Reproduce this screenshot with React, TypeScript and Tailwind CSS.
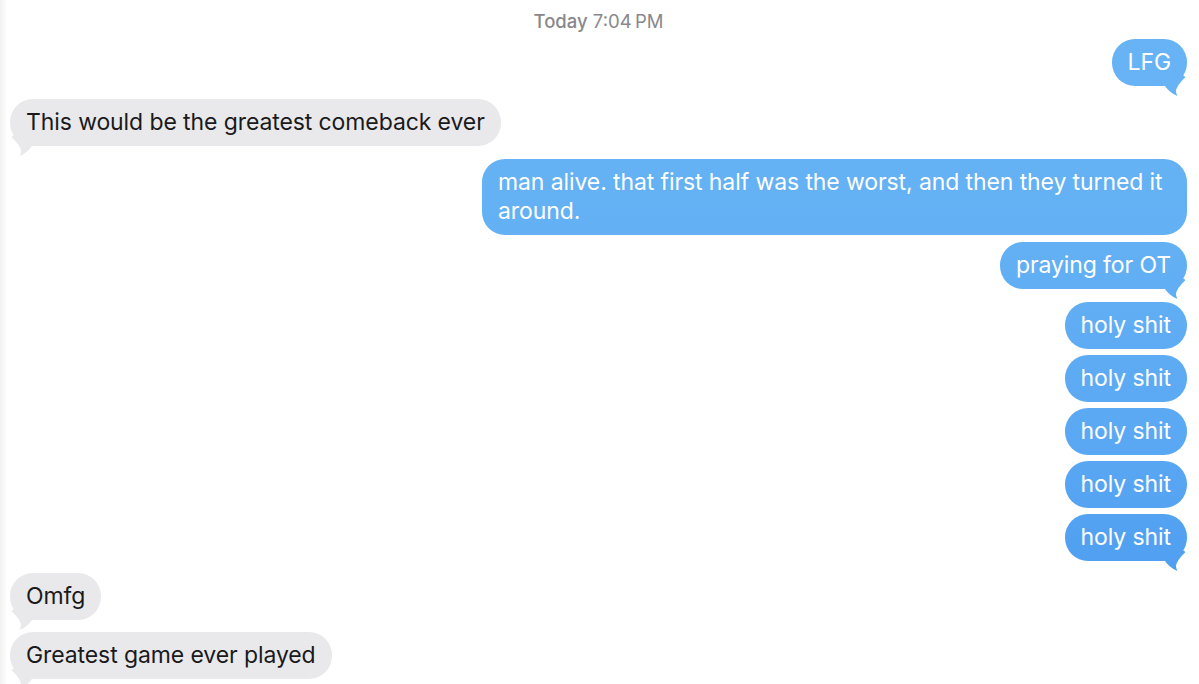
import React from "react";

type Msg = {
  text: string;
  me: boolean;
  tail: boolean;
  mt: string;
};

const messages: Msg[] = [
  { text: "LFG", me: true, tail: true, mt: "mt-[6px]" },
  { text: "This would be the greatest comeback ever", me: false, tail: true, mt: "mt-[13px]" },
  { text: "man alive. that first half was the worst, and then they turned it around.", me: true, tail: false, mt: "mt-[13px]" },
  { text: "praying for OT", me: true, tail: true, mt: "mt-[7px]" },
  { text: "holy shit", me: true, tail: false, mt: "mt-[13px]" },
  { text: "holy shit", me: true, tail: false, mt: "mt-[6px]" },
  { text: "holy shit", me: true, tail: false, mt: "mt-[6px]" },
  { text: "holy shit", me: true, tail: false, mt: "mt-[6px]" },
  { text: "holy shit", me: true, tail: true, mt: "mt-[6px]" },
  { text: "Omfg", me: false, tail: true, mt: "mt-[12px]" },
  { text: "Greatest game ever played", me: false, tail: true, mt: "mt-[12px]" },
];

const blue =
  "bg-fixed bg-[linear-gradient(to_bottom,#68b4f5_0%,#63b0f4_35%,#5aa8f3_65%,#4c9cf0_90%)]";
const gray = "bg-[#e9e9eb]";

function Bubble({ msg }: { msg: Msg }) {
  const color = msg.me ? blue : gray;
  return (
    <div className={`flex ${msg.me ? "justify-end" : "justify-start"} ${msg.mt}`}>
      <div
        className={`relative max-w-[705px] rounded-[23px] px-[16px] py-[9px] text-[23px] leading-[29px] tracking-[-0.1px] ${color} ${
          msg.me ? "text-white" : "text-[#1a1a1c]"
        }`}
      >
        <span className="relative z-10">{msg.text}</span>
        {msg.tail && (
          <div
            className={`absolute bottom-[-10px] h-[30px] w-[28px] ${color} [clip-path:path('M4_17Q10_27_18.5_30Q17_27_17_25.5Q17_20_26.5_11L18_5Z')] ${
              msg.me ? "right-0" : "left-0 -scale-x-100"
            }`}
          />
        )}
      </div>
    </div>
  );
}

export default function App() {
  return (
    <div className="h-[684px] w-[1199px] overflow-hidden bg-[linear-gradient(to_right,#f1f1f2,#ffffff_7px)] pl-[10px] pr-[12px] pt-[9px] font-['Inter',sans-serif] antialiased">
      <div className="text-center text-[18.5px] leading-[24px] text-[#88888c]">
        <span className="font-medium">Today</span> 7:04&#8201;PM
      </div>
      {messages.map((m, i) => (
        <Bubble key={i} msg={m} />
      ))}
    </div>
  );
}
